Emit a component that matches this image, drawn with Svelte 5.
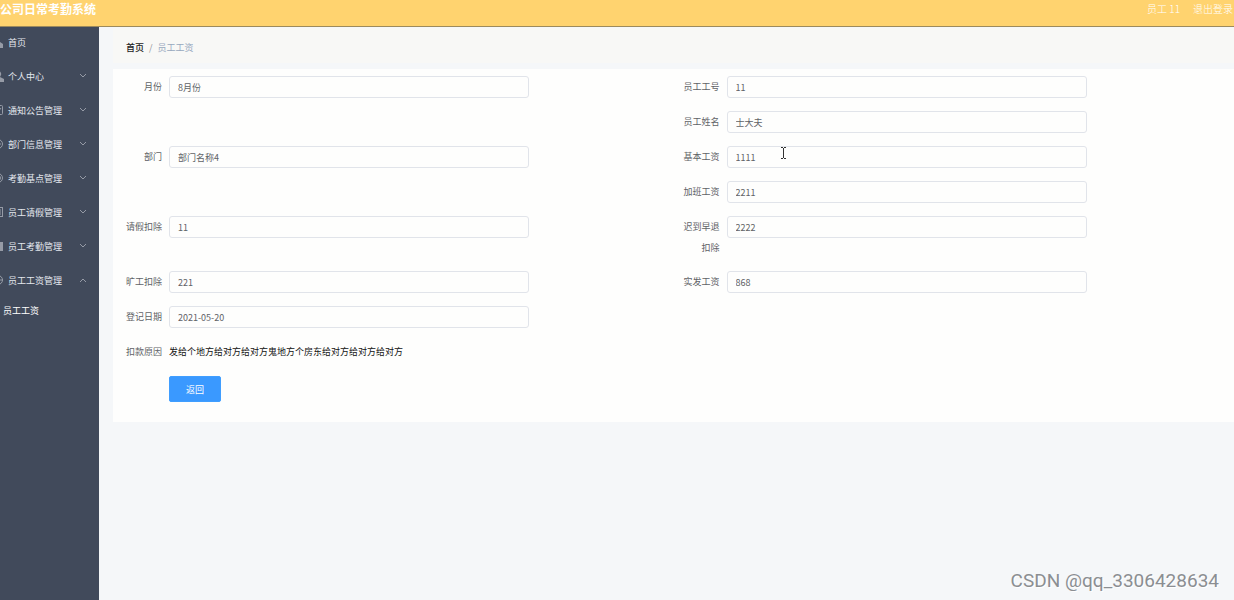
<script>
  const menus = [
    { icon: 'home', title: '首页' },
    { icon: 'user', title: '个人中心', arrow: true },
    { icon: 'check', title: '通知公告管理', arrow: true },
    { icon: 'clock', title: '部门信息管理', arrow: true },
    { icon: 'target', title: '考勤基点管理', arrow: true },
    { icon: 'doc', title: '员工请假管理', arrow: true },
    { icon: 'chart', title: '员工考勤管理', arrow: true },
    { icon: 'globe', title: '员工工资管理', arrow: true, open: true, children: ['员工工资'] },
  ];

  // col / row place each field in the two-column form
  const fields = [
    { id: 'yuefen', label: '月份', value: '8月份', col: 1, row: 1 },
    { id: 'gonghao', label: '员工工号', value: '11', col: 2, row: 1 },
    { id: 'xingming', label: '员工姓名', value: '士大夫', col: 2, row: 2 },
    { id: 'bumen', label: '部门', value: '部门名称4', col: 1, row: 3 },
    { id: 'jiben', label: '基本工资', value: '1111', col: 2, row: 3 },
    { id: 'jiaban', label: '加班工资', value: '2211', col: 2, row: 4 },
    { id: 'qingjia', label: '请假扣除', value: '11', col: 1, row: 5 },
    { id: 'chidao', label: '迟到早退扣除', value: '2222', col: 2, row: 5 },
    { id: 'kuanggong', label: '旷工扣除', value: '221', col: 1, row: 6 },
    { id: 'shifa', label: '实发工资', value: '868', col: 2, row: 6 },
    { id: 'riqi', label: '登记日期', value: '2021-05-20', col: 1, row: 7 },
  ];
</script>

<div class="page">
  <header class="navbar">
    <h1>公司日常考勤系统</h1>
    <div class="account">
      <span>员工 11</span>
      <a href="#logout">退出登录</a>
    </div>
  </header>

  <div class="body">
    <nav class="sidebar">
      <ul>
        {#each menus as menu}
          <li>
            <a class="menu-item" href="#menu">
              <svg class="icon" viewBox="0 0 12 12" fill="none" stroke="currentColor" aria-hidden="true">
                {#if menu.icon === 'home'}
                  <path d="M1 12V5l4-4 3 3v2l3 2v4z" fill="currentColor" stroke="none" />
                {:else if menu.icon === 'user'}
                  <path d="M6 1a3 3 0 0 1 3 4l-1 2 4 2v3H1V9l3-2-1-2a3 3 0 0 1 3-4z" fill="currentColor" stroke="none" />
                {:else if menu.icon === 'check'}
                  <rect x="1.5" y="1.5" width="9" height="9" rx="1" />
                  <path d="m4 6 2 2 3-4" />
                {:else if menu.icon === 'clock'}
                  <circle cx="6" cy="6" r="4.5" />
                  <path d="M6 3v3h3" />
                {:else if menu.icon === 'target'}
                  <circle cx="6" cy="6" r="4.5" />
                  <circle cx="6" cy="6" r="2.5" />
                {:else if menu.icon === 'doc'}
                  <rect x="1.5" y="1.5" width="9" height="9" />
                  <path d="M3 4h6M3 6h6M3 8h6" />
                {:else if menu.icon === 'chart'}
                  <path d="M1 11V4h2v7zM4 11V1h3v10zM8 11V2h3v9z" fill="currentColor" stroke="none" />
                {:else}
                  <circle cx="6" cy="6" r="4.5" />
                  <path d="M2 6h9M6 2v8" />
                {/if}
              </svg>
              <span class="title">{menu.title}</span>
              {#if menu.arrow}
                <svg class="arrow" class:open={menu.open} viewBox="0 0 8 8" fill="none" stroke="currentColor" aria-hidden="true">
                  <path d="m1 2 3 3 3-3" />
                </svg>
              {/if}
            </a>
            {#if menu.children}
              {#each menu.children as child}
                <a class="sub-item" href="#sub">{child}</a>
              {/each}
            {/if}
          </li>
        {/each}
      </ul>
    </nav>

    <main>
      <nav class="breadcrumb" aria-label="breadcrumb">
        <a href="#home">首页</a>
        <span class="sep">/</span>
        <span class="current">员工工资</span>
      </nav>

      <form class="panel" onsubmit={(e) => e.preventDefault()}>
        <div class="fields">
          {#each fields as field}
            <div class="field" style="grid-area: {field.row} / {field.col}">
              <label for={field.id}>{field.label}</label>
              <input id={field.id} type="text" value={field.value} readonly />
            </div>
          {/each}
          <div class="field reason">
            <span class="label">扣款原因</span>
            <p>发给个地方给对方给对方鬼地方个房东给对方给对方给对方</p>
          </div>
        </div>
        <div class="actions">
          <button type="button">返回</button>
        </div>
      </form>
    </main>
  </div>

  <svg class="cursor" viewBox="0 0 7 12" fill="none" stroke="#333" aria-hidden="true">
    <path d="M1 .5h2M4 .5h2M3.5 1v10M1 11.5h2M4 11.5h2" />
  </svg>
  <div class="watermark">CSDN @qq_3306428634</div>
</div>

<style>
  :global(body) {
    background: #f5f7f9;
  }

  .page {
    position: relative;
    display: flex;
    flex-direction: column;
    min-height: 100vh;
    overflow: hidden;
    font-family: 'Noto Sans CJK SC', sans-serif;
    font-size: 9px;
    color: #606266;
  }

  a {
    color: inherit;
    text-decoration: none;
  }

  .navbar {
    display: flex;
    justify-content: space-between;
    height: 26px;
    background: #ffd36f;
    border-bottom: 1px solid #9d8a5c;
    color: #fff;
    line-height: 18px;
  }
  .navbar h1 {
    margin: 0;
    font-size: 12px;
    font-weight: 700;
  }
  .account {
    display: flex;
    gap: 13px;
    padding-right: 1px;
    font-size: 10px;
    font-weight: 300;
  }

  .body {
    display: flex;
    flex: 1;
  }

  .sidebar {
    flex: 0 0 99px;
    overflow: hidden;
    background: #414a5b;
    color: #e4e8ee;
  }
  .sidebar ul {
    display: grid;
    gap: 4px;
    margin: 0;
    padding: 0;
    list-style: none;
  }
  .menu-item {
    display: flex;
    align-items: center;
    height: 30px;
    padding-right: 12px;
  }
  .icon {
    width: 12px;
    height: 12px;
    margin: 0 4px 0 -8px;
    color: #969ba6;
  }
  .title {
    flex: 1;
  }
  .arrow {
    width: 8px;
    height: 8px;
    color: #969ba6;
  }
  .arrow.open {
    transform: rotate(180deg);
  }
  .sub-item {
    display: block;
    padding-left: 3px;
    line-height: 32px;
    color: #fff;
  }

  main {
    flex: 1;
    min-width: 0;
    padding-left: 14px;
  }

  .breadcrumb {
    display: flex;
    gap: 5px;
    margin: 1px 0 6px;
    padding: 4px 0 0 13px;
    background: #f8f8f6;
    line-height: 31px;
  }
  .breadcrumb a {
    color: #222;
    font-weight: 500;
  }
  .breadcrumb .sep {
    color: #909399;
  }
  .breadcrumb .current {
    color: #97a8be;
  }

  .panel {
    padding: 7px 2px 20px 4px;
    background: #fefefd;
  }
  .fields {
    display: grid;
    grid-template-columns: 1fr 1fr;
    row-gap: 13px;
  }
  .field {
    display: flex;
    align-items: flex-start;
    min-height: 22px;
  }
  label,
  .label {
    flex: 0 0 52px;
    box-sizing: border-box;
    padding-right: 7px;
    line-height: 21px;
    text-align: right;
  }
  label {
    padding-left: 1px;
  }
  input {
    width: 100%;
    max-width: 360px;
    height: 22px;
    box-sizing: border-box;
    padding: 0 8px;
    border: 1px solid #e1e4ea;
    border-radius: 3px;
    background: #fefefd;
    color: #606266;
    font: inherit;
    outline: none;
  }
  .reason {
    grid-column: 1 / -1;
  }
  .reason p {
    margin: 0;
    line-height: 21px;
    color: #111;
  }

  .actions {
    padding: 13px 0 0 52px;
  }
  button {
    display: block;
    height: 26px;
    padding: 0 16px;
    border: 1px solid #409eff;
    border-radius: 2px;
    background: #3a99ff;
    color: #fff;
    font: inherit;
    cursor: pointer;
  }

  .cursor {
    position: absolute;
    top: 147px;
    left: 780px;
    width: 7px;
    height: 12px;
  }
  .watermark {
    position: absolute;
    right: 15px;
    bottom: 7px;
    color: #8b8e92;
    font: 19px/24px Roboto, sans-serif;
    text-shadow: 1px 1px 0 #fff;
  }
</style>
